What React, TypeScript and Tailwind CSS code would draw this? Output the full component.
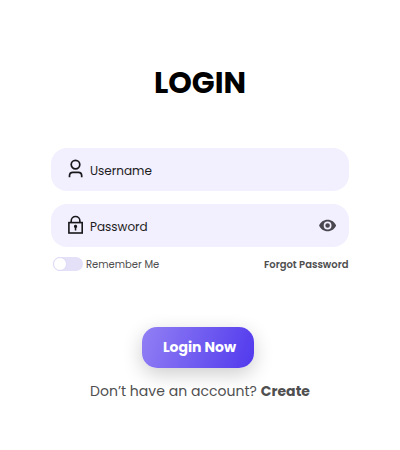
import type { ReactNode } from 'react';

function UserIcon() {
  return (
    <svg className="h-[20px] w-[16px] shrink-0" viewBox="0 0 16 20" fill="none" stroke="#18181b" strokeWidth="1.7">
      <circle cx="7.5" cy="5.6" r="4.3" />
      <path d="M1.5 18.3V16.8Q1.5 13.4 4.9 13.4H10.3Q13.7 13.4 13.7 16.8V18.3" />
    </svg>
  );
}

function LockIcon() {
  return (
    <svg className="h-[20px] w-[16px] shrink-0" viewBox="0 0 16 20" fill="none" stroke="#18181b" strokeWidth="1.6">
      <rect x="0.9" y="7.6" width="13.3" height="10.4" />
      <path d="M3.2 7.5V5.9C3.2 3.3 5.1 1.5 7.55 1.5S11.9 3.3 11.9 5.9V7.5" />
      <path d="M5.9 11.5a1.65 1.65 0 1 1 2.4 1.45V15.5H6.8V12.95A1.65 1.65 0 0 1 5.9 11.5Z" fill="#18181b" stroke="none" />
    </svg>
  );
}

function EyeIcon() {
  return (
    <svg className="h-[14px] w-[18px]" viewBox="0.4 -1.5 18 14">
      <path
        fill="#4a484e"
        fillRule="evenodd"
        d="M9 .2C5.1.2 1.8 2.6.5 6c1.3 3.4 4.6 5.8 8.5 5.8s7.2-2.4 8.5-5.8C16.2 2.6 12.9.2 9 .2Zm0 9.7A3.9 3.9 0 1 1 9 2.1a3.9 3.9 0 0 1 0 7.8Zm0-1.6A2.3 2.3 0 1 0 9 3.7a2.3 2.3 0 0 0 0 4.6Z"
      />
    </svg>
  );
}

function Field({ icon, children, end }: { icon: ReactNode; children: ReactNode; end?: ReactNode }) {
  return (
    <div className="flex h-[42.5px] items-center rounded-[16px] bg-[#f2efff] pr-[12.5px] pl-[17px]">
      {icon}
      <span className="ml-[6px] pt-[4px] text-[12px] text-[#1c1b20]">{children}</span>
      {end && <span className="ml-auto">{end}</span>}
    </div>
  );
}

export default function App() {
  return (
    <main className="flex h-[450px] w-[400px] flex-col items-center bg-white font-['Poppins','Inter',sans-serif]">
      <h1 className="mt-[65px] h-[36px] text-[30px] leading-[36px] font-bold text-black">LOGIN</h1>
      <form className="mt-[47px] flex w-[298px] flex-col gap-[13.5px]">
        <Field icon={<UserIcon />}>Username</Field>
        <Field icon={<LockIcon />} end={<EyeIcon />}>Password</Field>
      </form>
      <div className="mt-[9.5px] flex h-[16px] w-[298px] items-center pr-[0.5px] pl-[2px] text-[10px] text-[#4f4f4f]">
        <span className="flex h-[14px] w-[30px] items-center rounded-full bg-[#e4e0f7]">
          <span className="h-[14px] w-[14px] rounded-full border border-[#ded9f6] bg-white" />
        </span>
        <span className="ml-[3px]">Remember Me</span>
        <span className="ml-auto font-semibold">Forgot Password</span>
      </div>
      <button
        type="button"
        className="mt-[55px] mr-[4px] h-[41px] w-[112px] rounded-[15px] bg-linear-[110deg] from-[#9180f4] to-[#5139ed] pb-px pl-[3px] text-[14px] font-bold whitespace-nowrap text-white shadow-[0_6px_20px_rgba(0,0,0,0.2)]"
      >
        Login Now
      </button>
      <p className="mt-[13px] text-[14px] leading-[20px] tracking-[0.03px] whitespace-nowrap text-[#4f4f4f]">
        Don’t have an account? <strong className="font-bold">Create</strong>
      </p>
    </main>
  );
}
